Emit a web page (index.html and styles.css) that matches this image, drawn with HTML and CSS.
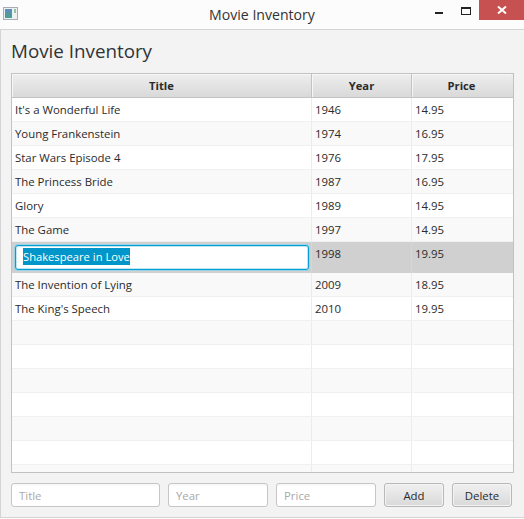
FILE: index.html
```html
<!DOCTYPE html>
<html lang="en">

<head>
  <meta charset="UTF-8">
  <title>Movie Inventory</title>
  <link rel="stylesheet" href="styles.css">
</head>

<body>
  <div class="titlebar">
    <div class="titlebar-left">
      <svg class="app-icon" width="16" height="14" viewBox="0 0 16 14">
        <rect x="0.5" y="0.5" width="14" height="12" fill="#eef1f3" stroke="#a9adb3" />
        <rect x="2" y="2" width="7" height="9" fill="#4f9c97" />
        <rect x="2" y="2" width="7" height="4" fill="#5d8fb8" />
        <rect x="11" y="2" width="2" height="4" fill="#8cc7a5" />
      </svg>
    </div>
    <div class="titlebar-text">Movie Inventory</div>
    <div class="titlebar-buttons">
      <span class="win-min"></span>
      <span class="win-max"></span>
      <span class="win-close">
        <svg width="10" height="10" viewBox="0 0 10 10">
          <path d="M1 1.5 L9 8.5 M9 1.5 L1 8.5" stroke="#fff" stroke-width="2" />
        </svg>
      </span>
    </div>
  </div>

  <div class="content">
    <h1>Movie Inventory</h1>

    <div class="table">
      <div class="row head">
        <div class="cell">Title</div>
        <div class="cell">Year</div>
        <div class="cell">Price</div>
      </div>
      <div class="row">
        <div class="cell">It's a Wonderful Life</div>
        <div class="cell">1946</div>
        <div class="cell">14.95</div>
      </div>
      <div class="row odd">
        <div class="cell">Young Frankenstein</div>
        <div class="cell">1974</div>
        <div class="cell">16.95</div>
      </div>
      <div class="row">
        <div class="cell">Star Wars Episode 4</div>
        <div class="cell">1976</div>
        <div class="cell">17.95</div>
      </div>
      <div class="row odd">
        <div class="cell">The Princess Bride</div>
        <div class="cell">1987</div>
        <div class="cell">16.95</div>
      </div>
      <div class="row">
        <div class="cell">Glory</div>
        <div class="cell">1989</div>
        <div class="cell">14.95</div>
      </div>
      <div class="row odd">
        <div class="cell">The Game</div>
        <div class="cell">1997</div>
        <div class="cell">14.95</div>
      </div>
      <div class="row editing">
        <div class="cell"><span class="edit-box"><span class="selected">Shakespeare in Love</span></span></div>
        <div class="cell">1998</div>
        <div class="cell">19.95</div>
      </div>
      <div class="row odd">
        <div class="cell">The Invention of Lying</div>
        <div class="cell">2009</div>
        <div class="cell">18.95</div>
      </div>
      <div class="row">
        <div class="cell">The King's Speech</div>
        <div class="cell">2010</div>
        <div class="cell">19.95</div>
      </div>
      <div class="row odd"><div class="cell"></div><div class="cell"></div><div class="cell"></div></div>
      <div class="row"><div class="cell"></div><div class="cell"></div><div class="cell"></div></div>
      <div class="row odd"><div class="cell"></div><div class="cell"></div><div class="cell"></div></div>
      <div class="row"><div class="cell"></div><div class="cell"></div><div class="cell"></div></div>
      <div class="row odd"><div class="cell"></div><div class="cell"></div><div class="cell"></div></div>
      <div class="row"><div class="cell"></div><div class="cell"></div><div class="cell"></div></div>
      <div class="row odd"><div class="cell"></div><div class="cell"></div><div class="cell"></div></div>
    </div>

    <div class="form">
      <input class="field field-title" type="text" placeholder="Title">
      <input class="field" type="text" placeholder="Year">
      <input class="field" type="text" placeholder="Price">
      <button class="btn">Add</button>
      <button class="btn">Delete</button>
    </div>
  </div>
</body>

</html>
```

FILE: styles.css
```css
* {
  box-sizing: border-box;
}

html,
body {
  height: 100%;
}

body {
  margin: 0;
  background-color: #fcfcfc;
  color: #2b2b2b;
  font-family: "Open Sans", sans-serif;
  font-size: 11.4px;
  overflow: hidden;
}

.titlebar {
  display: grid;
  grid-template-columns: 1fr auto 1fr;
  height: 29px;
}

.titlebar-left {
  padding: 7px 0 0 3px;
}

.app-icon {
  display: block;
}

.titlebar-text {
  font-size: 14.1px;
  line-height: 30px;
  color: #333;
}

.titlebar-buttons {
  display: flex;
  justify-content: flex-end;
  align-items: flex-start;
}

.win-min {
  width: 8px;
  height: 2px;
  margin-top: 12px;
  background-color: #222;
}

.win-max {
  width: 10px;
  height: 8px;
  margin: 7px 8px 0 18px;
  border: 1px solid #222;
  border-top-width: 2px;
}

.win-close {
  display: flex;
  align-items: center;
  justify-content: center;
  width: 45px;
  height: 20px;
  background-color: #c75050;
}

.content {
  display: flex;
  flex-direction: column;
  height: 489px;
  padding: 0 10px 9px;
  background-color: #f3f3f3;
  border: 1px solid #d4d4d4;
  border-right: 0;
}

h1 {
  margin: 0;
  height: 43px;
  font-size: 18.8px;
  font-weight: normal;
  line-height: 43px;
  color: #2f3338;
}

.table {
  height: 400px;
  overflow: hidden;
  background-color: #fff;
  border: 1px solid #c2c2c2;
}

.row {
  display: grid;
  grid-template-columns: 300px 100px 99px;
  height: 24px;
  background-color: #fff;
  border-bottom: 1px solid #f0f0f0;
}

.row.odd {
  background-color: #f9f9f9;
}

.cell {
  padding: 0 3px;
  line-height: 23px;
  white-space: nowrap;
  border-right: 1px solid #ececec;
}

.cell:last-child {
  border-right: 0;
}

.head {
  background: linear-gradient(#eeeeee, #d9d9d9);
  border-bottom: 1px solid #c2c2c2;
}

.head .cell {
  font-size: 11.2px;
  font-weight: bold;
  text-align: center;
  border-right: 1px solid #c2c2c2;
  box-shadow: inset 1px 1px 0 #f7f7f7;
}

.head .cell:last-child {
  border-right: 0;
}

.row.editing {
  height: 31px;
  background-color: #d0d0d0;
  border-bottom: 0;
}

.editing .cell {
  line-height: 24px;
  border-right-color: #d6d6d6;
}

.edit-box {
  display: block;
  height: 25px;
  margin: 3px -1px 0 0;
  padding: 0 7px;
  background-color: #fff;
  border: 1px solid #039ed3;
  border-radius: 3px;
  box-shadow: 0 0 0 1px #9bd3e8, inset 0 0 0 1px #bfe6f3;
  line-height: 22px;
}

.selected {
  display: inline-block;
  height: 17px;
  margin-top: 2px;
  font-size: 11.2px;
  line-height: 17px;
  background-color: #0096c9;
  color: #fff;
}

.form {
  display: flex;
  gap: 8px;
  margin-top: 10px;
}

.field {
  width: 100px;
  height: 24px;
  padding: 0 7px;
  font-family: inherit;
  font-size: 11.4px;
  background: linear-gradient(#f6f6f6, #fff 3px);
  border: 1px solid #c6c6c6;
  border-radius: 3px;
}

.field-title {
  width: 149px;
}

.field::placeholder {
  color: #a9a9a9;
}

.btn {
  width: 60px;
  height: 24px;
  padding: 0;
  font-family: inherit;
  font-size: 11.4px;
  color: #2b2b2b;
  background: linear-gradient(#f0f0f0, #d9d9d9);
  border: 1px solid #b8b8b8;
  border-radius: 3px;
  box-shadow: inset 0 0 0 1px #f4f4f4;
}
```
